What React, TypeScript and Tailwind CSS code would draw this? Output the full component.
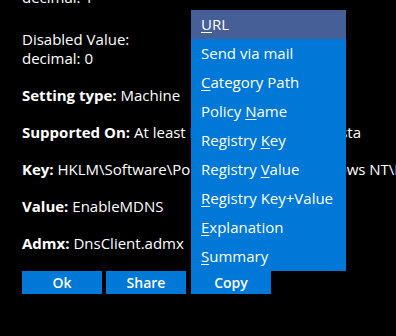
const menuItems: { pre?: string; key?: string; post: string; active?: boolean }[] = [
  { key: 'U', post: 'RL', active: true },
  { post: 'Send via mail' },
  { key: 'C', post: 'ategory Path' },
  { pre: 'Policy ', key: 'N', post: 'ame' },
  { pre: 'Registry ', key: 'K', post: 'ey' },
  { pre: 'Registry ', key: 'V', post: 'alue' },
  { key: 'R', post: 'egistry Key+Value' },
  { key: 'E', post: 'xplanation' },
  { key: 'S', post: 'ummary' },
]

function Field({ label, value }: { label: string; value: string }) {
  return (
    <p className="mb-[18px]">
      <span className="font-bold">{label}</span> {value}
    </p>
  )
}

export default function App() {
  return (
    <div className="relative h-[336px] w-[396px] overflow-hidden bg-black font-['Open_Sans',sans-serif] text-[15px] leading-[19px] text-white">
      <div className="mt-[-31px] whitespace-nowrap px-[22px]">
        <p className="mb-[23px]">
          Enabled Value:
          <br />
          decimal: 1
        </p>
        <p className="mb-[18px]">
          Disabled Value:
          <br />
          decimal: 0
        </p>
        <Field label="Setting type:" value="Machine" />
        <Field label="Supported On:" value="At least Microsoft Windows Vista" />
        <Field label="Key:" value="HKLM\Software\Policies\Microsoft\Windows NT\DNSClient" />
        <Field label="Value:" value="EnableMDNS" />
        <Field label="Admx:" value="DnsClient.admx" />

        <div className="flex">
          <button className="h-[23px] w-[80px] bg-[#0078d7] text-[14px] font-semibold text-white">Ok</button>
          <button className="ml-[4px] h-[23px] w-[80px] bg-[#0078d7] text-[14px] font-semibold text-white">
            Share
          </button>
          <button className="ml-[5px] h-[23px] w-[80px] bg-[#0078d7] text-[14px] font-semibold text-white">
            Copy
          </button>
        </div>
      </div>

      <ul className="absolute left-[191px] top-[10px] w-[155px] bg-[#0078d7]">
        {menuItems.map((item, i) => (
          <li
            key={i}
            className={`h-[29px] whitespace-nowrap pl-[10px] leading-[29px] ${item.active ? 'bg-[#465f96]' : ''}`}
          >
            {item.pre}
            {item.key && <u className="underline-offset-2">{item.key}</u>}
            {item.post}
          </li>
        ))}
      </ul>
    </div>
  )
}
